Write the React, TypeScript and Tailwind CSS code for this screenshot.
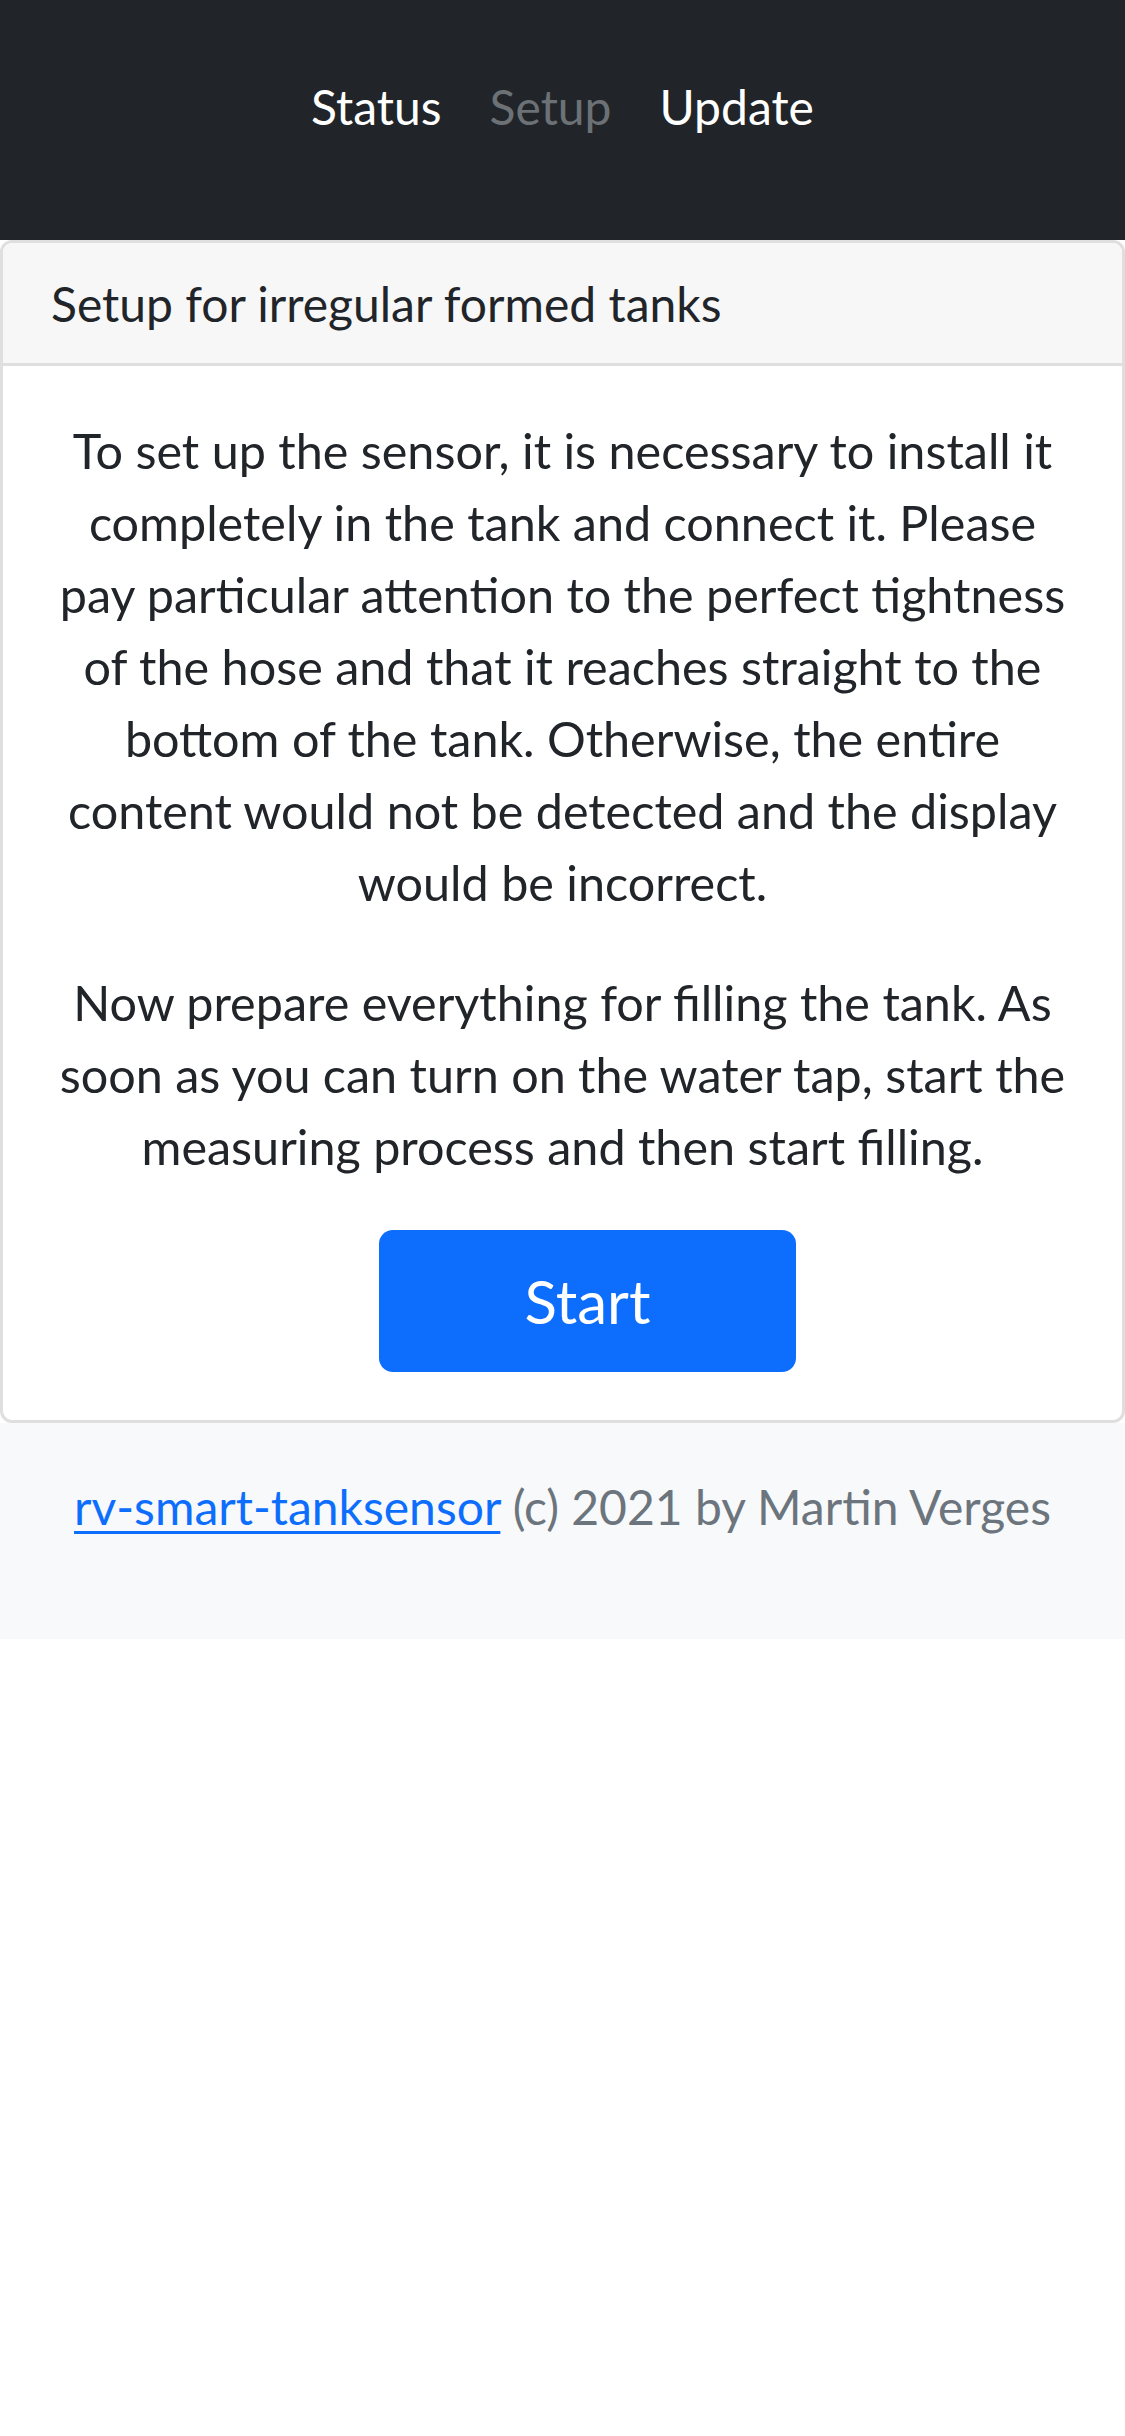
export default function App() {
  return (
    <div className="min-h-[2436px] bg-white text-[#212529] font-['Lato',sans-serif] text-[48px] leading-[72px]">
      {/* Navbar */}
      <nav className="h-[240px] bg-[#212529] pt-[71px]">
        <ul className="flex justify-center">
          <li>
            <a href="#" className="block px-[24px] text-white">
              Status
            </a>
          </li>
          <li>
            <a href="#" className="block px-[24px] text-[#6c7176]">
              Setup
            </a>
          </li>
          <li>
            <a href="#" className="block px-[24px] text-white">
              Update
            </a>
          </li>
        </ul>
      </nav>

      {/* Card */}
      <div className="rounded-[12px] border-[3px] border-[#dfdfdf] overflow-hidden">
        <div className="bg-[#f7f7f7] border-b-[3px] border-[#dfdfdf] px-[48px] pt-[25px] pb-[23px]">
          Setup for irregular formed tanks
        </div>
        <div className="p-[48px] text-center text-[48.5px]">
          <p className="mb-[48px]">
            To set up the sensor, it is necessary to install it completely in
            the tank and connect it. Please pay particular attention to the
            perfect tightness of the hose and that it reaches straight to the
            bottom of the tank. Otherwise, the entire content would not be
            detected and the display would be incorrect.
          </p>
          <p className="mb-[48px]">
            Now prepare everything for filling the tank. As soon as you can turn
            on the water tap, start the measuring process and then start
            filling.
          </p>
          <button className="ml-[50px] h-[142px] w-[417px] rounded-[14px] bg-[#0d6efd] text-[60px] leading-[90px] text-white">
            Start
          </button>
        </div>
      </div>

      {/* Footer */}
      <footer className="bg-[#f8f9fa] pt-[48px] pb-[96px] text-center text-[#6c757d]">
        <a href="#" className="text-[#0d6efd] underline decoration-[3px] underline-offset-[6px]">
          rv-smart-tanksensor
        </a>{" "}
        (c) 2021 by Martin Verges
      </footer>
    </div>
  );
}
